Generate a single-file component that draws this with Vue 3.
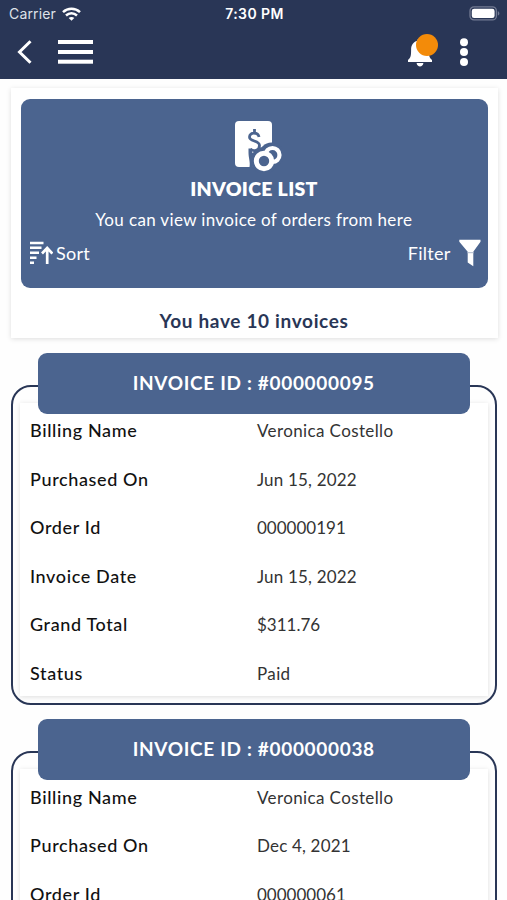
<script setup>
const invoices = [
  {
    id: '#000000095',
    rows: [
      ['Billing Name', 'Veronica Costello', 'name'],
      ['Purchased On', 'Jun 15, 2022', 'date'],
      ['Order Id', '000000191', 'num'],
      ['Invoice Date', 'Jun 15, 2022', 'date'],
      ['Grand Total', '$311.76', 'num'],
      ['Status', 'Paid', 'name'],
    ],
  },
  {
    id: '#000000038',
    rows: [
      ['Billing Name', 'Veronica Costello', 'name'],
      ['Purchased On', 'Dec 4, 2021', 'date'],
      ['Order Id', '000000061', 'num'],
    ],
  },
]
</script>

<template>
  <div class="screen">
    <header class="top">
      <div class="status">
        <div class="carrier">
          <span>Carrier</span>
          <svg width="19" height="14" viewBox="0 0 19 14" fill="none" stroke="#fff" stroke-width="2.5">
            <path d="M1 5.2C5.8.7 13.2.7 18 5.2" />
            <path d="M4 8.5c3.2-3 7.8-3 11 0" />
            <path d="M9.5 13.8 6.7 11c1.6-1.5 4-1.5 5.6 0z" fill="#fff" stroke="none" />
          </svg>
        </div>
        <span class="clock">7:30 PM</span>
        <div class="power">
          <svg width="31" height="15" viewBox="0 0 31 15">
            <rect x="1" y=".9" width="26.4" height="13" rx="4" fill="none" stroke="#737b93" stroke-width="1.3" />
            <rect x="2.8" y="2.7" width="22.8" height="9.4" rx="2.3" fill="#fff" />
            <path d="M28.8 5.2c2.1.7 2.1 3.7 0 4.4z" fill="#737b93" />
          </svg>
        </div>
      </div>
      <nav class="bar">
        <svg class="back" width="16" height="26" viewBox="0 0 16 26">
          <path d="M14.5 2.2 3.5 13 14.5 23.8" fill="none" stroke="#fff" stroke-width="3" />
        </svg>
        <svg class="menu" width="36" height="26" viewBox="0 0 36 26" fill="#fff">
          <rect x="1" y="1" width="35" height="4" />
          <rect x="1" y="11" width="35" height="4" />
          <rect x="1" y="20.7" width="35" height="4" />
        </svg>
        <div class="bell">
          <svg width="26" height="30" viewBox="0 0 26 30" fill="#fff">
            <path d="M13 .5c-1.7 0-2.5.9-2.7 2.3C6.2 4 4.1 7.3 4.1 11.8c0 6-.3 7.6-3.1 10.3V24h24v-1.9c-2.8-2.7-3.1-4.3-3.1-10.3 0-4.5-2.1-7.8-6.2-9C15.5 1.4 14.7.5 13 .5z" />
            <path d="M9.6 25h6.8c-.4 4.5-6.4 4.5-6.8 0z" />
          </svg>
          <i class="dot"></i>
        </div>
        <svg class="more" width="10" height="30" viewBox="0 0 10 30" fill="#fff">
          <circle cx="5" cy="5.3" r="4" />
          <circle cx="5" cy="15" r="4" />
          <circle cx="5" cy="24.9" r="4" />
        </svg>
      </nav>
    </header>

    <section class="intro">
      <div class="hero">
        <svg class="logo" width="50" height="54" viewBox="0 0 50 54">
          <rect x="2" y="2" width="37" height="46" rx="4" fill="#fff" />
          <path d="M26 18c-.7-5-9.5-5.3-9.5 0 0 5 10 3 10 8.5 0 5-6 6.5-9 3.5M21.5 10v4" fill="none" stroke="#4b648f" stroke-width="2.8" />
          <path d="M15.5 33.5v-4H19v3.5l2 2.5-2 12.5h-2.5c1-5-1-9-1-14.5z" fill="#4b648f" />
          <circle cx="38.5" cy="36" r="12.5" fill="#4b648f" />
          <circle cx="31" cy="41.5" r="13.5" fill="#4b648f" />
          <circle cx="39.500" cy="36" r="7" fill="none" stroke="#fff" stroke-width="4.2" />
          <circle cx="31" cy="42" r="7.7" fill="#4b648f" stroke="#fff" stroke-width="5" />
        </svg>
        <h1><span>INVOICE LIST</span></h1>
        <p class="sub"><span>You can view invoice of orders from here</span></p>
        <div class="tools">
          <div class="sort">
            <svg width="24" height="24" viewBox="0 0 24 24" fill="none" stroke="#fff">
              <path d="M1 2h13.5M1 6.8h11.5M1 11.8h9M1 16.8h6.5M1 21.7h4" stroke-width="2.4" />
              <path d="M18.2 23V8M13 12.5l5.2-5.5 5.2 5.5" stroke-width="2.7" />
            </svg>
            <span>Sort</span>
          </div>
          <div class="filter">
            <span>Filter</span>
            <svg width="22" height="28" viewBox="0 0 22 28">
              <path d="M.3.7h21.2v2L14.3 12.7v14.6l-5.6-3.7V12.7L.3 2.7z" fill="#fff" />
              <path d="M8 13.7h7" stroke="#a5b1c7" stroke-width=".9" />
            </svg>
          </div>
        </div>
      </div>
      <p class="count"><span>You have 10 invoices</span></p>
    </section>

    <article v-for="inv in invoices" :key="inv.id" class="invoice">
      <h2><span>INVOICE ID : {{ inv.id }}</span></h2>
      <div class="frame">
        <dl class="sheet">
          <div v-for="row in inv.rows" :key="row[0]" class="row">
            <dt>{{ row[0] }}</dt>
            <dd :class="row[2]">{{ row[1] }}</dd>
          </div>
        </dl>
      </div>
    </article>
  </div>
</template>

<style>
body {
  margin: 0;
  background: #fff;
}
</style>

<style scoped>
.screen {
  width: 507px;
  height: 900px;
  overflow: hidden;
  background: #fefefe;
  font-family: Lato, sans-serif;
  color: #111;
}
.screen * {
  box-sizing: border-box;
}
svg {
  display: block;
  flex: none;
}
h1, h2, p, dl, dt, dd {
  margin: 0;
  font-weight: 400;
}
.top {
  height: 79px;
  background: #293656;
  color: #fff;
}
.status {
  height: 27px;
  padding: 0 7px 0 9px;
  display: grid;
  grid-template-columns: 1fr auto 1fr;
  align-items: center;
  font-family: Inter, sans-serif;
}
.carrier {
  display: flex;
  align-items: center;
  gap: 6px;
  font-size: 14px;
  letter-spacing: 0.15px;
  color: #dfe2e9;
}
.clock {
  font-size: 14px;
  font-weight: 600;
  letter-spacing: 0.4px;
}
.power {
  display: flex;
  justify-content: flex-end;
}
.bar {
  height: 50px;
  padding: 0 38px 0 16px;
  display: flex;
  align-items: center;
}
.menu {
  margin-left: 25px;
}
.bell {
  position: relative;
  margin-left: auto;
  margin-right: 26px;
}
.bell svg {
  margin-top: 2px;
}
.dot {
  position: absolute;
  left: 9px;
  top: -2px;
  width: 22px;
  height: 22px;
  border-radius: 50%;
  background: #f38b09;
}
.intro {
  margin: 9px 9.5px 0 11px;
  height: 250px;
  padding: 10.5px 10px 0 9.5px;
  background: #fff;
  box-shadow: 0 1px 5px rgba(0, 0, 0, 0.13);
}
.hero {
  height: 189.5px;
  border-radius: 9px;
  background: #4b648f;
  color: #fff;
  padding: 20.5px 7px 0 8.5px;
  display: flex;
  flex-direction: column;
  align-items: center;
}
.logo {
  margin-left: 7px;
}
h1 {
  margin-top: 4px;
  margin-right: 1.5px;
  font-size: 19.5px;
  line-height: 24px;
  font-weight: 800;
  letter-spacing: 0.3px;
}
.sub {
  margin-top: 7px;
  margin-right: 2px;
  font-size: 17px;
  line-height: 24px;
  letter-spacing: 0.36px;
}
.tools {
  align-self: stretch;
  margin-top: 6px;
  display: flex;
  justify-content: space-between;
  font-size: 18px;
  line-height: 30px;
  letter-spacing: 0.25px;
}
.sort, .filter {
  display: flex;
  align-items: center;
}
.sort {
  gap: 3px;
}
.filter {
  gap: 8px;
}
.count {
  margin-top: 20px;
  text-align: center;
  font-size: 19px;
  line-height: 26px;
  font-weight: 700;
  letter-spacing: 0.66px;
  color: #293656;
}
.invoice {
  height: 366.5px;
  padding: 14.5px 10px 0 11px;
  display: flex;
  flex-direction: column;
}
h2 {
  position: relative;
  z-index: 1;
  flex: none;
  height: 61px;
  margin: 0 27px 0 26.5px;
  border-radius: 9px;
  background: #4b648f;
  color: #fff;
  text-align: center;
  font-size: 19px;
  font-weight: 700;
  line-height: 60px;
  letter-spacing: 0.68px;
}
.frame {
  height: 320px;
  margin-top: -29px;
  flex: none;
  border: 2.5px solid #293656;
  border-radius: 20px;
  padding: 16px 7px 7px;
}
.sheet {
  height: 100%;
  padding-top: 3.5px;
  background: #fff;
  box-shadow: 0 1px 5px rgba(0, 0, 0, 0.13);
}
.row {
  height: 48.5px;
  padding-left: 10px;
  display: grid;
  grid-template-columns: 227px 1fr;
}
dt {
  font-size: 18px;
  font-weight: 500;
  line-height: 49px;
  letter-spacing: 0.63px;
}
dd {
  font-size: 17px;
  line-height: 50px;
  color: #333;
}
.name {
  letter-spacing: 0.38px;
}
.date {
  letter-spacing: 0.18px;
}
</style>
